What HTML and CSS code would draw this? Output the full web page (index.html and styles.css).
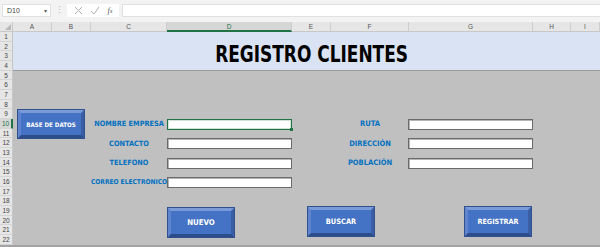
FILE: index.html
```html
<!DOCTYPE html>
<html lang="es">
<head>
    <meta charset="UTF-8">
    <meta name="viewport" content="width=device-width, initial-scale=1.0">
    <title>Registro Clientes</title>
    <link rel="stylesheet" href="styles.css">
</head>
<body>
    <!-- barra de fórmulas -->
    <div class="formula-bar">
        <div class="name-box">
            <span>D10</span>
            <span class="caret">▾</span>
        </div>
        <div class="grip">⋮</div>
        <div class="fx-tools">
            <svg width="9" height="9" viewBox="0 0 9 9"><path d="M1 1 L8 8 M8 1 L1 8" stroke="#b0b0b0" stroke-width="1" fill="none"/></svg>
            <svg width="10" height="9" viewBox="0 0 10 9"><path d="M1 5 L4 8 L9 1" stroke="#b0b0b0" stroke-width="1" fill="none"/></svg>
            <span class="fx">f<small>x</small></span>
        </div>
        <div class="formula-input"></div>
    </div>

    <div class="sheet">
        <div class="corner"><span class="corner-tri"></span></div>
        <div class="col-head">A</div>
        <div class="col-head">B</div>
        <div class="col-head">C</div>
        <div class="col-head active">D</div>
        <div class="col-head">E</div>
        <div class="col-head">F</div>
        <div class="col-head">G</div>
        <div class="col-head">H</div>
        <div class="col-head">I</div>

        <div class="row-head r1">1</div>
        <div class="row-head r2">2</div>
        <div class="row-head r3">3</div>
        <div class="row-head r4">4</div>
        <div class="row-head r5">5</div>
        <div class="row-head r6">6</div>
        <div class="row-head r7">7</div>
        <div class="row-head r8">8</div>
        <div class="row-head r9">9</div>
        <div class="row-head r10 active">10</div>
        <div class="row-head r11">11</div>
        <div class="row-head r12">12</div>
        <div class="row-head r13">13</div>
        <div class="row-head r14">14</div>
        <div class="row-head r15">15</div>
        <div class="row-head r16">16</div>
        <div class="row-head r17">17</div>
        <div class="row-head r18">18</div>
        <div class="row-head r19">19</div>
        <div class="row-head r20">20</div>
        <div class="row-head r21">21</div>
        <div class="row-head r22">22</div>

        <div class="title-band">
            <h1>REGISTRO CLIENTES</h1>
        </div>
        <div class="form-area"></div>

        <button class="btn btn-base">BASE DE DATOS</button>

        <div class="label left r10">NOMBRE EMPRESA</div>
        <div class="label left r12">CONTACTO</div>
        <div class="label left r14">TELEFONO</div>
        <div class="label left small r16">CORREO ELECTRONICO</div>

        <div class="field left r10 selected"><span class="handle"></span></div>
        <div class="field left r12"></div>
        <div class="field left r14"></div>
        <div class="field left r16"></div>

        <div class="label right r10">RUTA</div>
        <div class="label right r12">DIRECCIÓN</div>
        <div class="label right r14">POBLACIÓN</div>

        <div class="field right r10"></div>
        <div class="field right r12"></div>
        <div class="field right r14"></div>

        <button class="btn btn-nuevo">NUEVO</button>
        <button class="btn btn-buscar">BUSCAR</button>
        <button class="btn btn-registrar">REGISTRAR</button>
    </div>
    <div class="sheet-bottom"></div>
</body>
</html>
```

FILE: styles.css
```css
* {
    margin: 0;
    padding: 0;
    box-sizing: border-box;
}

body {
    width: 600px;
    height: 247px;
    overflow: hidden;
    background: #f3f3f3;
    font-family: "Liberation Sans", Arial, sans-serif;
}

/* barra de fórmulas */
.formula-bar {
    height: 22px;
    display: flex;
    align-items: flex-start;
    padding: 4px 0 0 2px;
    background: #f3f3f3;
}

.name-box {
    width: 49px;
    height: 13px;
    background: #fff;
    border: 1px solid #e1e1e1;
    display: flex;
    align-items: center;
    justify-content: space-between;
    padding: 0 3px 0 4px;
    font-size: 7px;
    color: #444;
}

.caret {
    font-size: 6px;
    color: #666;
}

.grip {
    width: 16px;
    text-align: center;
    font-size: 9px;
    line-height: 13px;
    color: #b5b5b5;
}

.fx-tools {
    width: 52px;
    height: 13px;
    background: #fff;
    display: flex;
    align-items: center;
    justify-content: space-around;
    padding: 0 3px;
}

.fx {
    font-family: "Liberation Serif", serif;
    font-style: italic;
    font-size: 8px;
    color: #555;
}

.fx small {
    font-size: 6px;
}

.formula-input {
    flex: 1;
    height: 13px;
    margin-left: 3px;
    background: #fff;
    border: 1px solid #e1e1e1;
    border-right: none;
}

/* hoja */
.sheet {
    display: grid;
    grid-template-columns: 13px 39px 39px 76px 125px 39px 78px 124px 38px 1fr;
    grid-template-rows: 10px repeat(22, 9.68px);
    font-family: "DejaVu Sans Condensed", "DejaVu Sans", sans-serif;
}

.corner {
    grid-row: 1;
    grid-column: 1;
    background: #e6e6e6;
    border-right: 1px solid #c8c8c8;
    border-bottom: 1px solid #c8c8c8;
    position: relative;
}

.corner-tri {
    position: absolute;
    right: 1px;
    bottom: 1px;
    width: 0;
    height: 0;
    border-left: 6px solid transparent;
    border-bottom: 6px solid #b9b9b9;
}

.col-head {
    grid-row: 1;
    background: #e6e6e6;
    border-right: 1px solid #cdcdcd;
    border-bottom: 1px solid #c8c8c8;
    font-family: "Liberation Sans", Arial, sans-serif;
    font-size: 6.5px;
    color: #555;
    text-align: center;
    line-height: 9px;
}

.col-head.active {
    background: #d6d6d6;
    border-bottom: 2px solid #217346;
    color: #217346;
}

.row-head {
    grid-column: 1;
    background: #e6e6e6;
    border-right: 1px solid #c6c6c6;
    border-bottom: 1px solid #d4d4d4;
    font-family: "Liberation Sans", Arial, sans-serif;
    font-size: 6.5px;
    color: #444;
    display: flex;
    align-items: center;
    justify-content: center;
}

.row-head.active {
    background: #d6d6d6;
    border-right: 2px solid #217346;
    color: #217346;
}

.r1 { grid-row: 2; }
.r2 { grid-row: 3; }
.r3 { grid-row: 4; }
.r4 { grid-row: 5; }
.r5 { grid-row: 6; }
.r6 { grid-row: 7; }
.r7 { grid-row: 8; }
.r8 { grid-row: 9; }
.r9 { grid-row: 10; }
.r10 { grid-row: 11; }
.r11 { grid-row: 12; }
.r12 { grid-row: 13; }
.r13 { grid-row: 14; }
.r14 { grid-row: 15; }
.r15 { grid-row: 16; }
.r16 { grid-row: 17; }
.r17 { grid-row: 18; }
.r18 { grid-row: 19; }
.r19 { grid-row: 20; }
.r20 { grid-row: 21; }
.r21 { grid-row: 22; }
.r22 { grid-row: 23; }

.title-band {
    grid-row: 2 / 6;
    grid-column: 2 / -1;
    background: #dae3f3;
    border-bottom: 1px solid #9c9c9c;
    display: flex;
    align-items: center;
    justify-content: center;
    padding: 8px 0 0 10px;
}

h1 {
    font-size: 23px;
    font-weight: bold;
    color: #000;
    line-height: 1;
    white-space: nowrap;
    transform: scaleX(0.82);
}

.form-area {
    grid-row: 6 / 24;
    grid-column: 2 / -1;
    background: #c0c0c0;
}

.label {
    font-size: 7.3px;
    font-weight: bold;
    color: #0070c0;
    text-align: center;
    display: flex;
    align-items: center;
    justify-content: center;
    white-space: nowrap;
}

.label.left {
    grid-column: 4;
}

.label.right {
    grid-column: 7;
    font-size: 7.5px;
}

.label.small {
    font-size: 6.6px;
}

.field {
    height: 11px;
    align-self: start;
    background: #fff;
    border: 1px solid #6a6a6a;
    box-shadow: inset 1px 1px 0 #b4b4b4;
    position: relative;
}

.field.left {
    grid-column: 5;
}

.field.right {
    grid-column: 8;
    margin-left: -1px;
}

.field.selected {
    border: 1px solid #217346;
    box-shadow: inset 0 0 0 1px #cfe3d6;
}

.handle {
    position: absolute;
    right: -2px;
    bottom: -2px;
    width: 3px;
    height: 3px;
    background: #217346;
}

/* botones biselados */
.btn {
    width: 68px;
    height: 31px;
    align-self: start;
    justify-self: start;
    background: #4472c4;
    border-style: solid;
    border-width: 4px;
    border-top-color: #7b9ad8;
    border-left-color: #5f83cc;
    border-right-color: #3a5ea3;
    border-bottom-color: #2d4d8a;
    outline: 1px solid #2f528f;
    outline-offset: -1px;
    color: #fff;
    font-family: "DejaVu Sans Condensed", "DejaVu Sans", sans-serif;
    font-size: 7.4px;
    font-weight: bold;
}

.btn-base {
    grid-column: 2 / 4;
    grid-row: 10 / 13;
    margin-left: 4px;
    height: 30px;
    font-size: 6.2px;
}

.btn-nuevo {
    grid-column: 5;
    grid-row: 20 / 23;
    margin-top: 1px;
    font-size: 7.8px;
}

.btn-buscar {
    grid-column: 6 / 8;
    grid-row: 20 / 23;
    margin-left: 15px;
}

.btn-registrar {
    grid-column: 8;
    grid-row: 20 / 23;
    margin-left: 55px;
    font-size: 7.2px;
}

.sheet-bottom {
    height: 2px;
    background: #a3a3a3;
}
```
